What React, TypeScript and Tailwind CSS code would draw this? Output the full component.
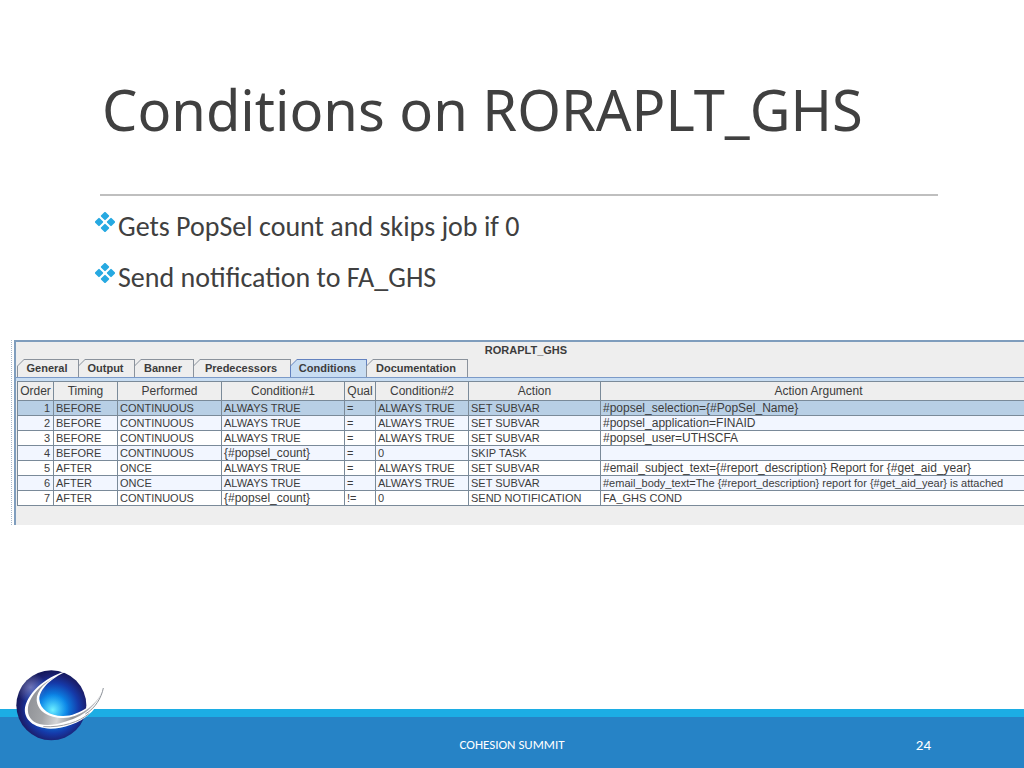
import clsx from "clsx";

const tabs = ["General", "Output", "Banner", "Predecessors", "Conditions", "Documentation"];

const tabWidths = ["w-[62px]", "w-[57px]", "w-[60px]", "w-[98px]", "w-[77px]", "w-[102px]"];

const columns = [
  { label: "Order", width: "w-[36px]" },
  { label: "Timing", width: "w-[64px]" },
  { label: "Performed", width: "w-[104px]" },
  { label: "Condition#1", width: "w-[123px]" },
  { label: "Qual", width: "w-[31px]" },
  { label: "Condition#2", width: "w-[93px]" },
  { label: "Action", width: "w-[132px]" },
  { label: "Action Argument", width: "w-auto" },
];

const rows = [
  ["1", "BEFORE", "CONTINUOUS", "ALWAYS TRUE", "=", "ALWAYS TRUE", "SET SUBVAR", "#popsel_selection={#PopSel_Name}"],
  ["2", "BEFORE", "CONTINUOUS", "ALWAYS TRUE", "=", "ALWAYS TRUE", "SET SUBVAR", "#popsel_application=FINAID"],
  ["3", "BEFORE", "CONTINUOUS", "ALWAYS TRUE", "=", "ALWAYS TRUE", "SET SUBVAR", "#popsel_user=UTHSCFA"],
  ["4", "BEFORE", "CONTINUOUS", "{#popsel_count}", "=", "0", "SKIP TASK", ""],
  ["5", "AFTER", "ONCE", "ALWAYS TRUE", "=", "ALWAYS TRUE", "SET SUBVAR", "#email_subject_text={#report_description} Report for {#get_aid_year}"],
  ["6", "AFTER", "ONCE", "ALWAYS TRUE", "=", "ALWAYS TRUE", "SET SUBVAR", "#email_body_text=The {#report_description} report for {#get_aid_year} is attached"],
  ["7", "AFTER", "CONTINUOUS", "{#popsel_count}", "!=", "0", "SEND NOTIFICATION", "FA_GHS COND"],
];

const bullets = ["Gets PopSel count and skips job if 0", "Send notification to FA_GHS"];

const DiamondBullet = () => (
  <svg viewBox="0 0 20 20" className="mt-[3px] h-5 w-5 shrink-0 fill-[#27a9e1]" aria-hidden="true">
    <rect x="6.8" y=".8" width="6.4" height="6.4" rx="1" transform="rotate(45 10 4)" />
    <rect x=".8" y="6.8" width="6.4" height="6.4" rx="1" transform="rotate(45 4 10)" />
    <rect x="12.8" y="6.8" width="6.4" height="6.4" rx="1" transform="rotate(45 16 10)" />
    <rect x="6.8" y="12.8" width="6.4" height="6.4" rx="1" transform="rotate(45 10 16)" />
  </svg>
);

const GlobeLogo = () => (
  <svg viewBox="48 27 264 219" className="absolute bottom-[26px] left-4 h-[73px] w-[88px]" role="img" aria-label="Globe logo">
    <defs>
      <radialGradient id="globe" gradientUnits="userSpaceOnUse" cx="160" cy="145" r="112">
        <stop offset="0" stopColor="#35c5fb" />
        <stop offset="0.35" stopColor="#0a84e6" />
        <stop offset="0.68" stopColor="#1539a8" />
        <stop offset="0.88" stopColor="#1b2173" />
        <stop offset="1" stopColor="#15195c" />
      </radialGradient>
      <radialGradient id="shine" gradientUnits="userSpaceOnUse" cx="92" cy="82" r="46">
        <stop offset="0" stopColor="#8f95cf" stopOpacity="0.7" />
        <stop offset="1" stopColor="#8f95cf" stopOpacity="0" />
      </radialGradient>
      <radialGradient id="glow" gradientUnits="userSpaceOnUse" cx="158" cy="150" r="50">
        <stop offset="0" stopColor="#6ff0ff" />
        <stop offset="1" stopColor="#1d9cf2" stopOpacity="0" />
      </radialGradient>
      <linearGradient id="metal" gradientUnits="userSpaceOnUse" x1="78" y1="100" x2="290" y2="150">
        <stop offset="0" stopColor="#8d8f94" />
        <stop offset="0.3" stopColor="#a3a5a8" />
        <stop offset="0.5" stopColor="#d4d5d7" />
        <stop offset="0.7" stopColor="#8f9196" />
        <stop offset="1" stopColor="#b9bbbf" />
      </linearGradient>
    </defs>
    <circle cx="154" cy="136" r="105" fill="url(#globe)" />
    <circle cx="154" cy="136" r="105" fill="url(#shine)" />
    <circle cx="154" cy="136" r="60" fill="url(#glow)" />
    <path
      d="M203 32C150 44 86 90 75 142C70 178 100 205 152 206C188 206 240 190 268 162C292 142 306 116 310 84C300 108 286 126 264 141C240 158 214 168 190 168C152 169 120 150 118 118C118 88 152 54 203 32Z"
      fill="#fff"
    />
    <path
      d="M180 45C136 62 92 98 84 142C81 168 94 186 118 192C140 197 168 195 192 186C220 178 276 162 308 94C284 140 236 174 190 174C146 174 112 154 110 120C109 92 138 62 180 45Z"
      fill="url(#metal)"
    />
    <path d="M130 200C186 203 238 186 268 160" fill="none" stroke="#9a9ca1" strokeWidth="3" />
    <path d="M310 84C304 114 286 144 256 162" fill="none" stroke="#8f949b" strokeWidth="3" />
  </svg>
);

const ConditionsPanel = () => (
  <section className="ml-[11px] overflow-hidden border-l border-dotted border-[#a9b9cc] pl-[2px] font-['Liberation_Sans',Arial,sans-serif] text-[11px] text-[#3c3c3c]">
    <div className="-mr-3 h-[185px] border-t-2 border-l-2 border-[#7f9dbd] bg-[#eeeeee]">
      <h2 className="h-[17px] text-center leading-4 font-bold">RORAPLT_GHS</h2>
      <div role="tablist" className="ml-px flex">
        {tabs.map((tab, i) => {
          const active = tab === "Conditions";
          return (
            <button
              key={tab}
              type="button"
              role="tab"
              aria-selected={active}
              className={clsx(
                "-mr-px h-[18px] pt-px pr-px pl-px font-bold [clip-path:polygon(7px_0,100%_0,100%_100%,0_100%,0_7px)]",
                tabWidths[i],
                active ? "bg-[#6382bf]" : "bg-[#8a929c]"
              )}
            >
              <span
                className={clsx(
                  "block h-full pr-[2px] leading-[17px] [clip-path:polygon(6px_0,100%_0,100%_100%,0_100%,0_6px)]",
                  active ? "bg-[#c8ddf2]" : "bg-[#eeeeee]"
                )}
              >
                {tab}
              </span>
            </button>
          );
        })}
      </div>
      <div className="h-1 border-t border-[#7b9ac8] bg-[#c8ddf2]" />
      <table className="ml-px w-full table-fixed border-collapse">
        <thead>
          <tr className="h-[19px]">
            {columns.map((col) => (
              <th
                key={col.label}
                className={clsx("border border-[#7a8a99] p-0 text-center text-[12px] leading-[18px] font-normal whitespace-nowrap", col.width)}
              >
                {col.label}
              </th>
            ))}
          </tr>
        </thead>
        <tbody>
          {rows.map((row, r) => (
            <tr key={row[0]} className={clsx("h-[15px]", r === 0 ? "bg-[#b8cfe5]" : r % 2 ? "bg-[#f2f6ff]" : "bg-white")}>
              {row.map((cell, c) => (
                <td
                  key={c}
                  className={clsx(
                    "border border-[#7a8a99] py-0 leading-[14px] whitespace-nowrap",
                    c === 0 ? "pr-[3px] text-right" : "pl-[2px]",
                    // variable expressions are a step larger, unless too long for the column
                    cell.includes("#") && cell.length < 75 && "text-[12px]"
                  )}
                >
                  {cell}
                </td>
              ))}
            </tr>
          ))}
        </tbody>
      </table>
    </div>
  </section>
);

export default function App() {
  return (
    <div className="flex min-h-screen flex-col overflow-hidden bg-white font-[Carlito,Lato,sans-serif] text-[#404040]">
      <header className="mr-[86px] ml-[100px] border-b-2 border-[#bfbfbf] pt-[77px] pb-[53px] pl-[2px]">
        <h1 className="font-['Noto_Sans',sans-serif] text-[56px] leading-[64px] whitespace-nowrap">Conditions on RORAPLT_GHS</h1>
      </header>

      <ul className="mt-[13px] mb-[44px] ml-[95px] flex flex-col gap-[15px]">
        {bullets.map((text) => (
          <li key={text} className="flex items-start gap-[3px] text-[28px] leading-9">
            <DiamondBullet />
            {text}
          </li>
        ))}
      </ul>

      <ConditionsPanel />

      <footer className="relative mt-auto grid h-[59px] grid-cols-[1fr_auto_1fr] items-center border-t-8 border-[#1cade4] bg-[#2683c6] pt-[5px] text-white">
        <GlobeLogo />
        <span className="col-start-2 text-[13px]">COHESION SUMMIT</span>
        <span className="pr-[93px] text-right text-[15px]">24</span>
      </footer>
    </div>
  );
}
